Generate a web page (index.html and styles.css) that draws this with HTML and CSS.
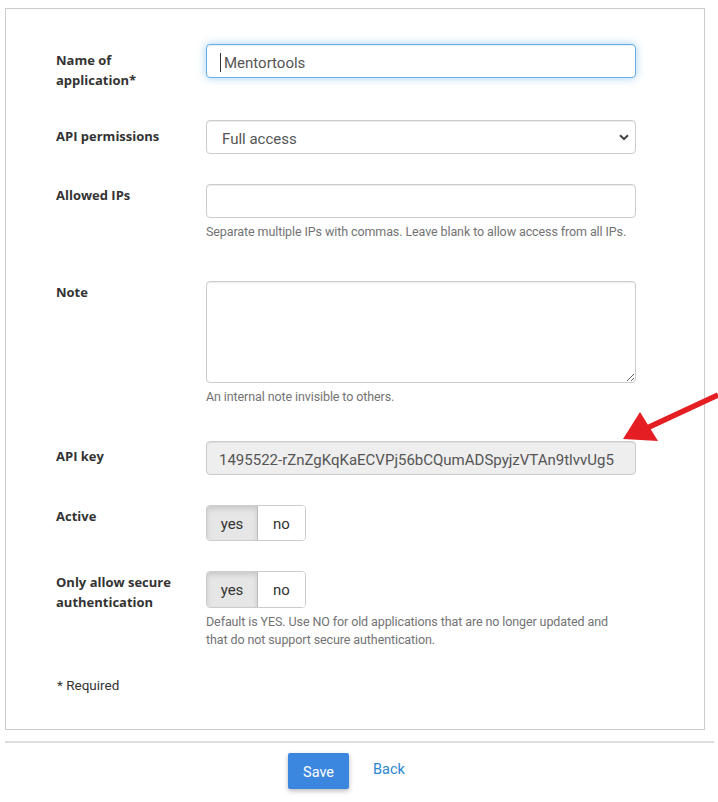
FILE: index.html
```html
<!DOCTYPE html>
<html lang="en">
<head>
<meta charset="utf-8">
<title>Edit API application</title>
<link rel="stylesheet" href="styles.css">
</head>
<body>
<div class="page">
  <form class="panel">
    <div class="form-row form-row--tall">
      <label class="form-label form-label--input" for="app-name">Name of application*</label>
      <div class="control">
        <div class="input-wrap">
          <input id="app-name" class="input input--focus" type="text" value="Mentortools">
          <span class="caret"></span>
        </div>
      </div>
    </div>

    <div class="form-row">
      <label class="form-label form-label--input" for="permissions">API permissions</label>
      <div class="control">
        <div class="select-wrap">
          <select id="permissions" class="input select">
            <option>Full access</option>
            <option>Read only</option>
          </select>
          <svg class="select-chevron" viewBox="0 0 10 7" width="10" height="7" aria-hidden="true">
            <path d="M1 1.2 L5 5 L9 1.2" fill="none" stroke="#444" stroke-width="2"/>
          </svg>
        </div>
      </div>
    </div>

    <div class="form-row">
      <label class="form-label" for="ips">Allowed IPs</label>
      <div class="control">
        <input id="ips" class="input" type="text">
        <p class="help-block">Separate multiple IPs with commas. Leave blank to allow access from all IPs.</p>
      </div>
    </div>

    <div class="form-row form-row--note">
      <label class="form-label" for="note">Note</label>
      <div class="control">
        <textarea id="note" class="input textarea"></textarea>
        <p class="help-block">An internal note invisible to others.</p>
      </div>
    </div>

    <div class="form-row">
      <label class="form-label form-label--key" for="api-key">API key</label>
      <div class="control">
        <input id="api-key" class="input input--readonly" type="text" readonly value="1495522-rZnZgKqKaECVPj56bCQumADSpyjzVTAn9tlvvUg5">
      </div>
    </div>

    <div class="form-row">
      <span class="form-label">Active</span>
      <div class="control">
        <div class="toggle">
          <span class="toggle-option toggle-option--on">yes</span>
          <span class="toggle-option">no</span>
        </div>
      </div>
    </div>

    <div class="form-row form-row--last">
      <span class="form-label">Only allow secure authentication</span>
      <div class="control">
        <div class="toggle toggle--secure">
          <span class="toggle-option toggle-option--on">yes</span>
          <span class="toggle-option">no</span>
        </div>
        <p class="help-block help-block--narrow">Default is YES. Use NO for old applications that are no longer updated and that do not support secure authentication.</p>
      </div>
    </div>

    <p class="required-note">* Required</p>
  </form>

  <hr class="divider">

  <div class="actions">
    <button class="btn-save" type="button">Save</button>
    <a class="link-back" href="#">Back</a>
  </div>

  <svg class="pointer-arrow" width="110" height="60" viewBox="610 390 110 60" aria-hidden="true">
    <line x1="647" y1="428" x2="718" y2="395" stroke="#e41e22" stroke-width="5.5"/>
    <polygon points="623,439 640,412 658,441" fill="#e41e22"/>
  </svg>
</div>
</body>
</html>
```

FILE: styles.css
```css
* {
  box-sizing: border-box;
}

html,
body {
  margin: 0;
  background: #fff;
}

body {
  font-family: Roboto, "Open Sans", sans-serif;
  font-size: 13px;
  color: #333;
}

.page {
  position: relative;
  padding: 8px 4px 0 5px;
  min-height: 802px;
}

/* Bordered form panel */
.panel {
  margin: 0 9px 0 0;
  border: 1px solid #ccc;
  padding: 35px 0 34px 50px;
}

.form-row {
  display: grid;
  grid-template-columns: 150px 430px;
  margin-bottom: 30px;
}

.form-row--last {
  margin-bottom: 16px;
}

.form-label {
  font-family: "Open Sans", "Noto Sans", sans-serif;
  font-weight: 700;
  font-size: 13px;
  line-height: 20px;
  padding-top: 1px;
  padding-right: 20px;
  color: #333;
}

.form-label--input {
  padding-top: 6px;
}

.form-label--key {
  padding-top: 5px;
}

.control {
  min-width: 0;
}

/* Text fields */
.input {
  display: block;
  width: 100%;
  height: 34px;
  margin: 0;
  padding: 4px 14px 0;
  border: 1px solid #ccc;
  border-radius: 4px;
  background: #fff;
  font-family: inherit;
  font-size: 15px;
  color: #555;
  box-shadow: inset 0 1px 1px rgba(0, 0, 0, 0.075);
  outline: none;
}

.input-wrap,
.select-wrap {
  position: relative;
}

.input--focus {
  border-color: #66afe9;
  box-shadow: inset 0 1px 1px rgba(0, 0, 0, 0.075), 0 0 8px rgba(102, 175, 233, 0.6);
  padding-left: 17px;
}

.caret {
  position: absolute;
  left: 14px;
  top: 9px;
  width: 1px;
  height: 19px;
  background: #333;
}

.select {
  appearance: none;
  -webkit-appearance: none;
  padding-left: 15px;
}

.select-chevron {
  position: absolute;
  right: 7px;
  top: 14px;
}

.textarea {
  height: 102px;
  padding: 6px 14px;
  resize: vertical;
}

.input--readonly {
  background: #eee;
  padding-left: 12px;
}

.help-block {
  margin: 5px 0 10px;
  font-size: 12.5px;
  letter-spacing: -0.1px;
  line-height: 18px;
  color: #737373;
}

.help-block--narrow {
  max-width: 418px;
}

.form-row--note .help-block {
  margin-bottom: 5px;
}

/* Yes / no button group */
.toggle {
  display: inline-flex;
  height: 36px;
  border: 1px solid #ccc;
  border-radius: 4px;
  overflow: hidden;
  font-size: 15px;
  color: #333;
}

.toggle--secure {
  height: 37px;
}

.toggle-option {
  display: flex;
  align-items: center;
  justify-content: center;
  width: 47px;
  padding-top: 1px;
  background: #fff;
}

.toggle-option--on {
  width: 51px;
  background: #e6e6e6;
  border-right: 1px solid #bdbdbd;
  box-shadow: inset 0 3px 5px rgba(0, 0, 0, 0.125);
}

.required-note {
  margin: 0;
  font-size: 13.5px;
  line-height: 20px;
  padding-left: 1px;
}

.divider {
  margin: 11px 0 0;
  border: 0;
  border-top: 2px solid #ddd;
}

/* Footer actions */
.actions {
  display: flex;
  justify-content: center;
  align-items: center;
  gap: 24px;
  padding: 10px 26px 0 0;
}

.btn-save {
  width: 61px;
  height: 36px;
  border: 0;
  border-radius: 2px;
  background: #3b87e0;
  color: #fff;
  font-family: inherit;
  font-size: 14.5px;
  padding: 2px 0 0;
  box-shadow: 0 2px 5px rgba(0, 0, 0, 0.28);
}

.link-back {
  color: #2a86d1;
  font-size: 14.5px;
  text-decoration: none;
  margin-top: -3px;
}

.pointer-arrow {
  position: absolute;
  left: 610px;
  top: 390px;
}
```
